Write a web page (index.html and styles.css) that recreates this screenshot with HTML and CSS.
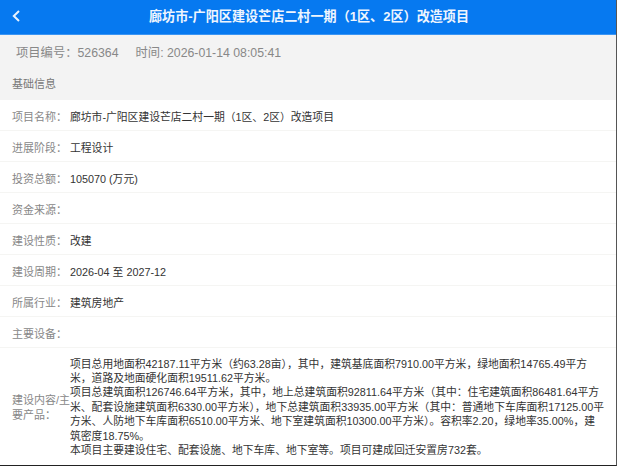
FILE: index.html
```html
<!DOCTYPE html>
<html lang="zh-CN">
  <head>
    <meta charset="UTF-8" />
    <meta name="viewport" content="width=device-width, initial-scale=1.0" />
    <title>项目详情</title>
    <link rel="stylesheet" href="styles.css">
  </head>
  <body>
    <div class="page">
      <div class="header">
        <svg class="back-icon" width="10" height="14" viewBox="0 0 10 14">
          <path d="M8 2 L2.8 7 L8 12" fill="none" stroke="#e8f2fe" stroke-width="2" />
        </svg>
        <h1>廊坊市-广阳区建设芒店二村一期（1区、2区）改造项目</h1>
      </div>

      <div class="meta">
        <span>项目编号：526364</span>
        <span>时间: 2026-01-14 08:05:41</span>
      </div>
      <div class="section-title">基础信息</div>

      <div class="info-list">
        <div class="info-row">
          <div class="info-label">项目名称：</div>
          <div class="info-value">廊坊市-广阳区建设芒店二村一期（1区、2区）改造项目</div>
        </div>
        <div class="info-row">
          <div class="info-label">进展阶段：</div>
          <div class="info-value">工程设计</div>
        </div>
        <div class="info-row">
          <div class="info-label">投资总额：</div>
          <div class="info-value">105070 (万元)</div>
        </div>
        <div class="info-row">
          <div class="info-label">资金来源：</div>
          <div class="info-value"></div>
        </div>
        <div class="info-row">
          <div class="info-label">建设性质：</div>
          <div class="info-value">改建</div>
        </div>
        <div class="info-row">
          <div class="info-label">建设周期：</div>
          <div class="info-value">2026-04 至 2027-12</div>
        </div>
        <div class="info-row">
          <div class="info-label">所属行业：</div>
          <div class="info-value">建筑房地产</div>
        </div>
        <div class="info-row">
          <div class="info-label">主要设备：</div>
          <div class="info-value"></div>
        </div>
        <div class="info-row info-row-long">
          <div class="info-label">建设内容/主<br>要产品：</div>
          <div class="info-value">
            <p>项目总用地面积42187.11平方米（约63.28亩），其中，建筑基底面积7910.00平方米，绿地面积14765.49平方<br>米，道路及地面硬化面积19511.62平方米。</p>
            <p>项目总建筑面积126746.64平方米，其中，地上总建筑面积92811.64平方米（其中：住宅建筑面积86481.64平方<br>米、配套设施建筑面积6330.00平方米），地下总建筑面积33935.00平方米（其中：普通地下车库面积17125.00平<br>方米、人防地下车库面积6510.00平方米、地下室建筑面积10300.00平方米）。容积率2.20，绿地率35.00%，建<br>筑密度18.75%。</p>
            <p>本项目主要建设住宅、配套设施、地下车库、地下室等。项目可建成回迁安置房732套。</p>
          </div>
        </div>
      </div>
    </div>
  </body>
</html>
```

FILE: styles.css
```css
* {
  margin: 0;
  padding: 0;
  box-sizing: border-box;
}

body {
  font-family: "Liberation Sans", "Noto Sans CJK SC", sans-serif;
  background-color: #fff;
  color: #333;
}

.page {
  width: 617px;
  height: 466px;
  overflow: hidden;
  background-color: #fff;
  border-right: 1px solid #555;
  border-bottom: 1px solid #222;
}

.header {
  height: 35px;
  background-color: #0679f0;
  border-bottom: 1px solid #3b95f3;
  display: flex;
  align-items: center;
  position: relative;
}

.back-icon {
  position: absolute;
  left: 11px;
  top: 9px;
}

.header h1 {
  flex: 1;
  padding-left: 2px;
  text-align: center;
  color: #eef5fe;
  font-size: 13.1px;
  font-weight: bold;
  line-height: 34px;
}

.meta {
  height: 34px;
  background-color: #f3f3f3;
  padding: 0 16px;
  display: flex;
  align-items: center;
  gap: 17px;
  font-size: 12.3px;
  color: #888;
}

.section-title {
  height: 31px;
  background-color: #f3f3f3;
  padding: 0 12px;
  font-size: 11px;
  line-height: 30px;
  color: #777;
}

.info-row {
  height: 31px;
  display: flex;
  align-items: center;
  padding-top: 2px;
  padding-left: 12px;
  border-bottom: 1px solid #f5f5f3;
  font-size: 11px;
}

.info-label {
  width: 58px;
  flex-shrink: 0;
  color: #888;
}

.info-value {
  color: #333;
  font-size: 10.8px;
}

.info-row-long {
  height: 118px;
  border-bottom: none;
  padding-top: 0;
  padding-right: 0;
  line-height: 14.4px;
  white-space: nowrap;
}

.info-row-long .info-label {
  line-height: 15px;
  padding-top: 2px;
}
```
